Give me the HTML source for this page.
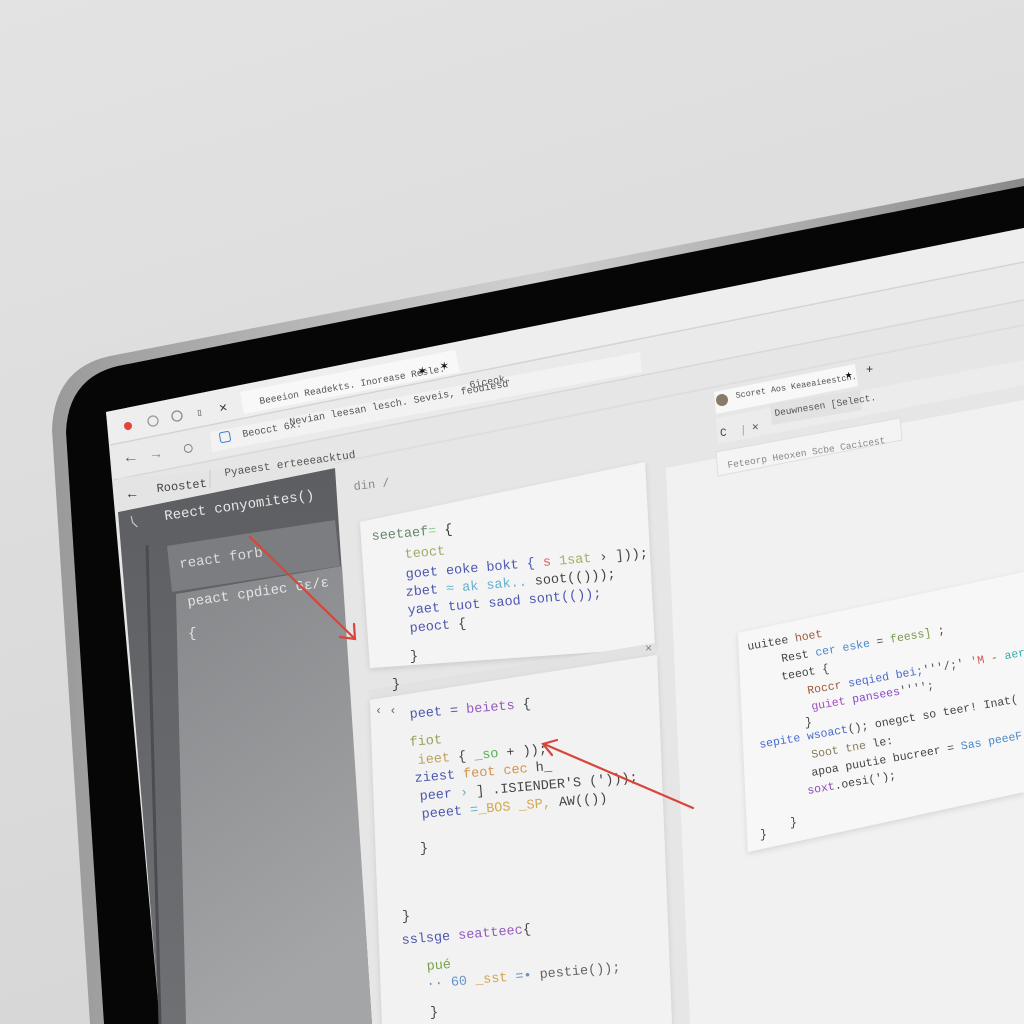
<!DOCTYPE html>
<html><head><meta charset="utf-8"><style>
html,body{margin:0;padding:0;width:1024px;height:1024px;overflow:hidden;background:#dcdcdc}
svg{display:block}
text{font-family:"Liberation Mono",monospace}
.s{font-family:"Liberation Sans",sans-serif}
</style></head><body>
<svg width="1024" height="1024" viewBox="0 0 1024 1024" xmlns="http://www.w3.org/2000/svg">
<defs>
<linearGradient id="bg" x1="0" y1="0" x2="0.3" y2="1"><stop offset="0" stop-color="#e3e3e3"/><stop offset="1" stop-color="#d6d6d6"/></linearGradient>
<linearGradient id="sil" x1="0" y1="0" x2="1" y2="0"><stop offset="0" stop-color="#9a9a9a"/><stop offset="0.5" stop-color="#d0d0d0"/><stop offset="1" stop-color="#8a8a8a"/></linearGradient>
<linearGradient id="side" x1="0" y1="0" x2="0" y2="1"><stop offset="0" stop-color="#5c5e62"/><stop offset="1" stop-color="#6e7074"/></linearGradient>
<linearGradient id="pan" x1="0" y1="0" x2="0.3" y2="1"><stop offset="0" stop-color="#85878a"/><stop offset="1" stop-color="#a4a5a7"/></linearGradient>
<filter id="sh" x="-10%" y="-10%" width="120%" height="120%"><feDropShadow dx="0" dy="2" stdDeviation="3" flood-color="#000" flood-opacity="0.12"/></filter>
</defs>
<rect width="1024" height="1024" fill="url(#bg)"/>
<path d="M52,430 Q54,368 110,356 L1024,178 L1024,1024 L90,1024 Z" fill="url(#sil)"/>
<path d="M66,432 Q68,378 118,366 L1024,186 L1024,1024 L104,1024 Z" fill="#060606"/>
<path d="M106,412 L1024,228 L1024,1024 L160,1024 Z" fill="#e6e6e6"/>
<path d="M106,412 L1024,228 L1024,262 L110,445 Z" fill="#eeeeee"/>
<path d="M110,445 L1024,262 L1024,300 L113,480 Z" fill="#eaeaea"/>
<path d="M110,445 L1024,262" stroke="#d4d4d4" stroke-width="1.5"/>
<path d="M113,480 L1024,300" stroke="#d8d8d8" stroke-width="1.5"/>
<path d="M300,470 L1024,325" stroke="#dedede" stroke-width="2"/>
<path d="M240,392 L455,350 L460,372 L244,414 Z" fill="#f8f8f8"/>
<path d="M210,432 L640,352 L642,372 L212,452 Z" fill="#f2f2f2"/>
<path d="M118,512 L335,468 L372,1024 L160,1024 Z" fill="url(#side)"/>
<path d="M118,478 L335,462 L335,468 L118,512 Z" fill="#e4e4e4"/>
<path d="M147,545 L160,1024" stroke="#4a4c50" stroke-width="3"/>
<path d="M167,546 L335,520 L340,566 L172,592 Z" fill="#7b7d81"/>
<path d="M176,594 L342,566 L372,1024 L186,1024 Z" fill="url(#pan)"/>
<path d="M360,522 L645,462 L655,648 L370,668 Z" fill="#f4f4f4" filter="url(#sh)"/>
<path d="M368,690 L655,643 L657,655 L370,700 Z" fill="#e2e2e2"/>
<path d="M370,700 L657,655 L672,1024 L382,1024 Z" fill="#f2f2f2" filter="url(#sh)"/>
<path d="M666,468 L1024,400 L1024,1024 L690,1024 Z" fill="#f1f1f1"/>
<path d="M714,392 L855,364 L858,386 L716,414 Z" fill="#f8f8f8"/>
<path d="M716,418 L1024,360 L1024,385 L718,444 Z" fill="#ececec"/>
<path d="M770,404 L860,390 L862,410 L772,425 Z" fill="#e2e2e2"/>
<path d="M716,452 L900,418 L902,440 L718,476 Z" fill="#f4f4f4" stroke="#dedede"/>
<path d="M738,633 L1024,572 L1024,792 L748,852 Z" fill="#f7f7f7" filter="url(#sh)"/>
<circle cx="722" cy="400" r="6" fill="#8a7a6a"/>
<circle cx="128" cy="426" r="4" fill="#e0443a"/>
<circle cx="153" cy="421" r="5" fill="none" stroke="#999" stroke-width="1.3"/>
<circle cx="177" cy="416" r="5" fill="none" stroke="#8a8aa0" stroke-width="1.3"/>
<g class="s" font-family="Liberation Sans" fill="#555">
<text x="197" y="416" font-size="10" transform="rotate(-10 197 416)">▯</text>
<text x="220" y="412" font-size="13" transform="rotate(-10 220 412)" fill="#333">✕</text>
<text x="260" y="404" font-size="9.5" font-family="Liberation Sans" transform="rotate(-10 260 404)">Beeeion Readekts. Inorease Resle.</text>
<text x="418" y="375" font-size="14" fill="#111">✶</text><text x="440" y="370" font-size="14" fill="#111">✶</text>
<text x="470" y="388" font-size="10" font-family="Liberation Sans" transform="rotate(-10 470 388)">6iceok.</text>
<text x="290" y="425" font-size="10" font-family="Liberation Sans" transform="rotate(-10 290 425)">Nevian leesan lesch. Seveis, feodiesd</text>
<rect x="220" y="432" width="10" height="10" rx="2" fill="none" stroke="#3a7ad0" transform="rotate(-10 225 437)"/>
<text x="243" y="437" font-size="10" font-family="Liberation Sans" transform="rotate(-10 243 437)">Beocct 6x.</text>
<text x="126" y="462" font-size="16" fill="#666">←</text><text x="152" y="458" font-size="14" fill="#888">→</text>
<text x="184" y="452" font-size="14" fill="#777">◯</text>
<path d="M210,470 L210,488" stroke="#ccc"/>
<text x="225" y="476" font-size="11" font-family="Liberation Sans" transform="rotate(-8 225 476)">Pyaeest erteeeacktud</text>
<text x="128" y="498" font-size="14" fill="#333">←</text>
<text x="157" y="492" font-size="12" font-family="Liberation Sans" transform="rotate(-6 157 492)" fill="#444">Roostet</text>
<text x="354" y="490" font-size="12" font-family="Liberation Sans" fill="#888" transform="rotate(-6 354 490)">din /</text>
<text x="132" y="528" font-size="14" fill="#ccc" transform="rotate(-30 132 528)">⟨</text>
<text x="736" y="398" font-size="8.5" font-family="Liberation Sans" transform="rotate(-9 736 398)">Scoret Aos Keaeaieestch.</text>
<text x="845" y="378" font-size="12" fill="#111">★</text><text x="866" y="373" font-size="12" fill="#333">+</text>
<text x="720" y="436" font-size="11" fill="#444">C</text><text x="740" y="433" font-size="11" fill="#8ab">|</text><text x="752" y="430" font-size="11">✕</text>
<text x="775" y="416" font-size="9.5" font-family="Liberation Sans" transform="rotate(-9 775 416)">Deuwnesen [Select.</text>
<text x="728" y="468" font-size="9.5" font-family="Liberation Sans" fill="#888" transform="rotate(-9 728 468)">Feteorp Heoxen Scbe Cacicest</text>
</g>
<g font-size="14" fill="#e6e6e6">
<text x="165" y="520" transform="rotate(-8 165 520)">Reect conyomites()</text>
<text x="180" y="568" fill="#dcdcdc" transform="rotate(-8 180 568)">react  forb</text>
<text x="188" y="606" fill="#e4e4e4" transform="rotate(-8 188 606)">peact  cpdiec  6ε/ε</text>
<text x="188" y="637" fill="#e4e4e4">{</text>
</g>
<g font-size="13.5" opacity="0.9">
<text x="372" y="540" fill="#5b7a5c" transform="rotate(-5 372 540)">seetaef<tspan fill="#8c8">=</tspan><tspan fill="#222"> {</tspan></text>
<text x="405" y="558" fill="#9aa05a" transform="rotate(-5 405 558)">teoct</text>
<text x="406" y="578" fill="#3b47a8" transform="rotate(-5 406 578)">goet  eoke  bokt {  <tspan fill="#c55">s</tspan> <tspan fill="#9a5">1sat</tspan> <tspan fill="#333">› ]));</tspan></text>
<text x="406" y="596" fill="#3b47a8" transform="rotate(-5 406 596)">zbet <tspan fill="#5ac">≈ ak sak..</tspan> <tspan fill="#333">soot(()));</tspan></text>
<text x="408" y="614" fill="#3b47a8" transform="rotate(-5 408 614)">yaet  tuot  saod  sont(());</text>
<text x="410" y="632" fill="#3b47a8" transform="rotate(-5 410 632)">peoct<tspan fill="#333"> {</tspan></text>
<text x="645" y="652" fill="#777" font-size="12">×</text>
<text x="410" y="660" fill="#333">}</text>
<text x="392" y="688" fill="#333">}</text>
<text x="375" y="714" fill="#555" font-size="12">‹ ‹</text>
<text x="410" y="718" fill="#3b47a8" transform="rotate(-5 410 718)">peet = <tspan fill="#8a4ab8">beiets</tspan><tspan fill="#333"> {</tspan></text>
<text x="410" y="746" fill="#8a9a4a" transform="rotate(-5 410 746)">fiot</text>
<text x="418" y="764" fill="#b89a4a" transform="rotate(-5 418 764)">ieet <tspan fill="#333"> {</tspan>  <tspan fill="#4a4">_so</tspan><tspan fill="#333"> + ));</tspan></text>
<text x="415" y="782" fill="#3b47a8" transform="rotate(-5 415 782)">ziest <tspan fill="#d08a3a">feot cec</tspan><tspan fill="#333"> h_</tspan></text>
<text x="420" y="800" fill="#3b47a8" transform="rotate(-5 420 800)">peer <tspan fill="#5ac">›</tspan><tspan fill="#333"> ] .ISIENDER'S (')));</tspan></text>
<text x="422" y="818" fill="#3b47a8" transform="rotate(-5 422 818)">peeet <tspan fill="#5ac">=</tspan><tspan fill="#d0a040">_BOS _SP,</tspan><tspan fill="#333"> AW(())</tspan></text>
<text x="420" y="852" fill="#333">}</text>
<text x="402" y="920" fill="#333">}</text>
<text x="402" y="944" fill="#3b47a8" transform="rotate(-5 402 944)">sslsge <tspan fill="#8a4ab8">seatteec</tspan><tspan fill="#333">{</tspan></text>
<text x="427" y="970" fill="#6a9a3a" transform="rotate(-5 427 970)">pué</text>
<text x="427" y="988" fill="#5a8ac0" transform="rotate(-5 427 988)">·· 60 <tspan fill="#d09a40">_sst</tspan> =• <tspan fill="#555">pestie());</tspan></text>
<text x="430" y="1016" fill="#333">}</text>
</g>
<g font-size="11.5">
<text x="748" y="650" fill="#444" transform="rotate(-10 748 650)">uuitee <tspan fill="#a05a3a">hoet</tspan></text>
<text x="782" y="662" fill="#444" transform="rotate(-10 782 662)">Rest <tspan fill="#4a8ac8">cer eske</tspan> = <tspan fill="#7a9a4a">feess]</tspan> ;</text>
<text x="782" y="680" fill="#444" transform="rotate(-10 782 680)">teeot {</text>
<text x="808" y="694" fill="#a05a3a" transform="rotate(-10 808 694)">Roccr <tspan fill="#4a6ad0">seqied bei;</tspan><tspan fill="#555">'''/;'</tspan> <tspan fill="#c55">'M</tspan> - <tspan fill="#3aa">aerorett(</tspan></text>
<text x="812" y="710" fill="#a04ac0" transform="rotate(-10 812 710)">guiet <tspan fill="#8a4ac8">pansees</tspan><tspan fill="#555">'''';</tspan></text>
<text x="805" y="726" fill="#444">}</text>
<text x="760" y="748" fill="#4a6ad0" transform="rotate(-10 760 748)">sepite wsoact<tspan fill="#444">();  onegct so teer! Inat(</tspan></text>
<text x="812" y="758" fill="#8a7a5a" transform="rotate(-10 812 758)">Soot tne <tspan fill="#444">le:</tspan></text>
<text x="812" y="776" fill="#444" transform="rotate(-10 812 776)">apoa puutie bucreer = <tspan fill="#4a8ac8">Sas peeeF</tspan></text>
<text x="808" y="794" fill="#8a4ab8" transform="rotate(-10 808 794)">soxt<tspan fill="#444">.oesi(');</tspan></text>
<text x="790" y="826" fill="#444">}</text>
<text x="760" y="838" fill="#444">}</text>
</g>
<g stroke="#d8453a" stroke-width="2.2" fill="none" stroke-linecap="round">
<line x1="250" y1="537" x2="354" y2="638"/>
<path d="M354,624 L355,639 L340,637"/>
<line x1="693" y1="808" x2="544" y2="744"/>
<path d="M552,755 L543,744 L557,740"/>
</g>
</svg>
</body></html>
